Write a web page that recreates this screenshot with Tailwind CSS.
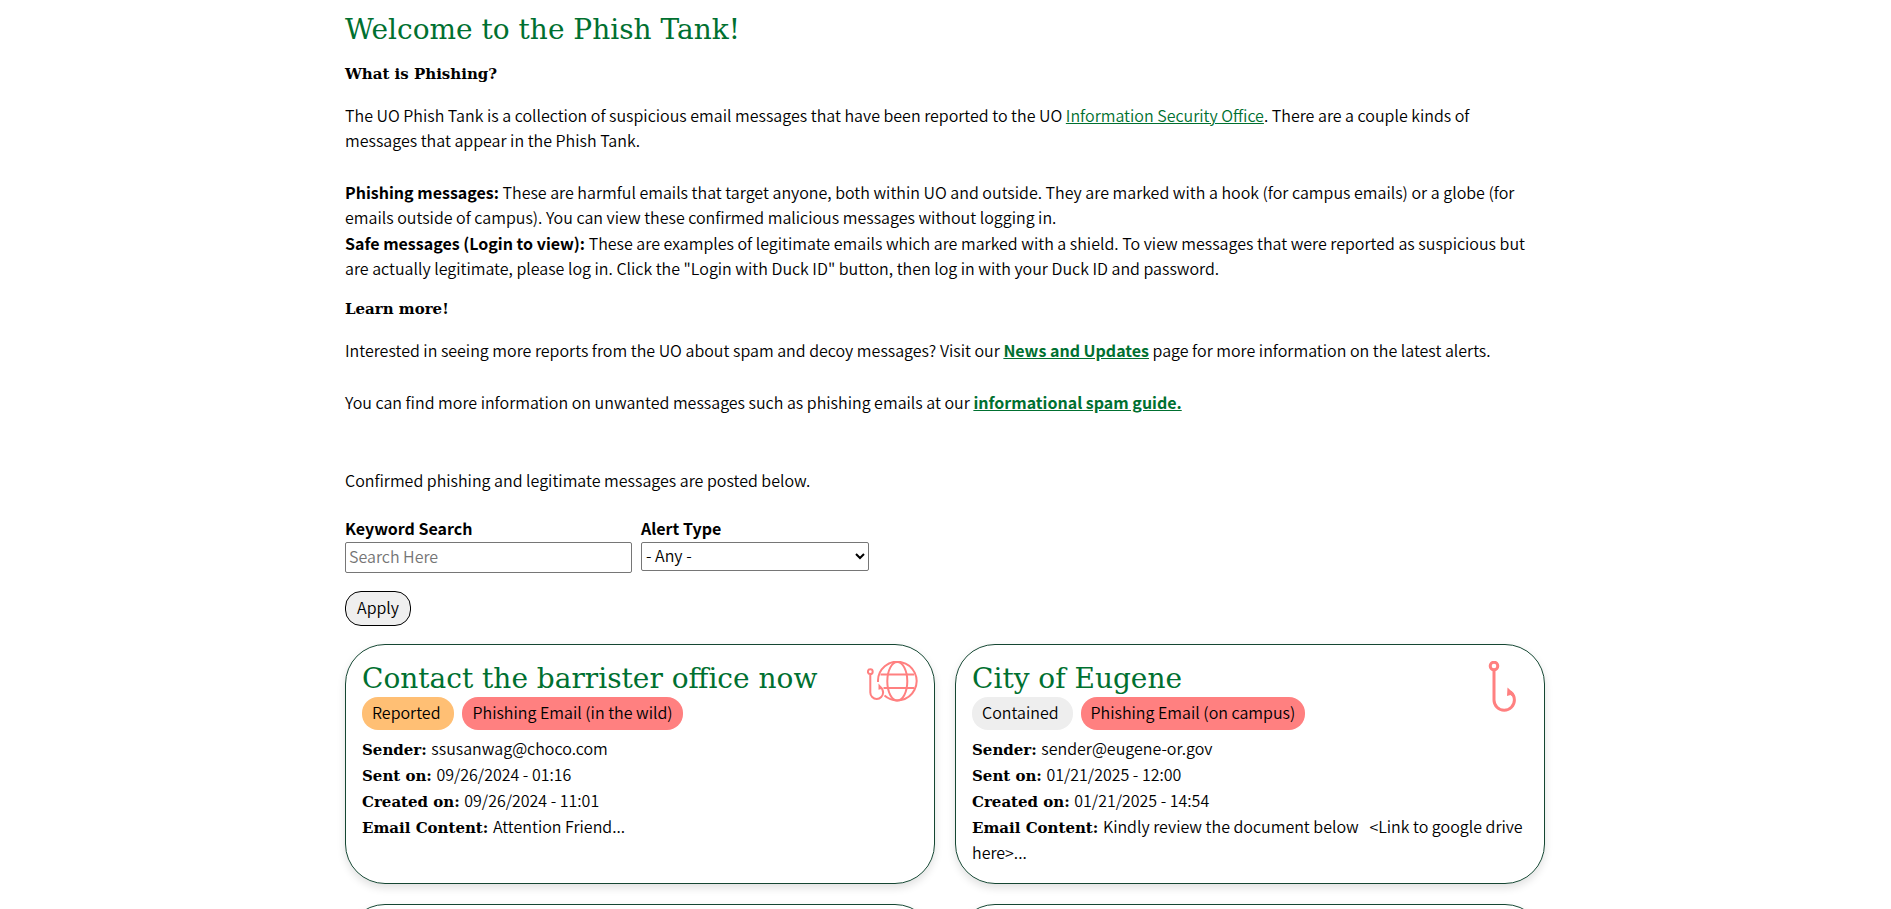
<!DOCTYPE html>
<html lang="en">
<head>
    <meta charset="UTF-8" />
    <meta name="viewport" content="width=device-width, initial-scale=1" />
    <title>Phish Tank</title>
    <script src="https://cdn.jsdelivr.net/npm/@tailwindcss/browser@4"></script>
</head>
<body class="bg-white text-black font-[350] text-base leading-[25px] font-['Noto_Sans_CJK_SC',sans-serif]">

<main class="max-w-[1201px] mx-auto pt-[9px] pr-px">
    <h1 class="text-[#007030] text-[28px] leading-[42px] font-normal font-['DejaVu_Serif',serif]">Welcome to the Phish Tank!</h1>

    <!-- Intro -->
    <h2 class="mt-[11px] font-bold text-[15px] leading-6 font-['DejaVu_Serif',serif]">What is Phishing?</h2>
    <p class="mt-[17px] pr-4">The UO Phish Tank is a collection of suspicious email messages that have been reported to the UO <a href="#" class="text-[#007030] underline">Information Security Office</a>. There are a couple kinds of messages that appear in the Phish Tank.</p>
    <ul class="mt-[27px]">
        <li><strong class="font-bold">Phishing messages:</strong> These are harmful emails that target anyone, both within UO and outside. They are marked with a hook (for campus emails) or a globe (for emails outside of campus). You can view these confirmed malicious messages without logging in.</li>
        <li class="mt-px"><strong class="font-bold">Safe messages (Login to view):</strong> These are examples of legitimate emails which are marked with a shield. To view messages that were reported as suspicious but are actually legitimate, please log in. Click the "Login with Duck ID" button, then log in with your Duck ID and password.</li>
    </ul>

    <h2 class="mt-4 font-bold text-[15px] leading-6 font-['DejaVu_Serif',serif]">Learn more!</h2>
    <p class="mt-[17px]">Interested in seeing more reports from the UO about spam and decoy messages? Visit our <a href="#" class="text-[#007030] font-bold underline">News and Updates</a> page for more information on the latest alerts.</p>
    <p class="mt-[27px]">You can find more information on unwanted messages such as phishing emails at our <a href="#" class="text-[#007030] font-bold underline">informational spam guide.</a></p>
    <p class="mt-[53px]">Confirmed phishing and legitimate messages are posted below.</p>

    <!-- Filters -->
    <form class="mt-[23px]">
        <div class="flex items-start gap-[9px]">
            <div>
                <label for="keyword" class="block font-bold leading-[25px]">Keyword Search</label>
                <input id="keyword" type="text" placeholder="Search Here" class="block mt-px w-[287px] h-[31px] border border-[#767676] rounded-xs px-[3px] pb-[3px] placeholder:text-[#757575]" />
            </div>
            <div>
                <label for="alert-type" class="block font-bold leading-[25px]">Alert Type</label>
                <div class="relative mt-px">
                    <select id="alert-type" class="block appearance-none w-[228px] h-[29px] border border-[#767676] rounded-xs bg-white pl-1 pr-5 pb-[3px] leading-6">
                        <option>- Any -</option>
                    </select>
                    <svg class="absolute right-1 top-[11px] w-[10px] h-[7px] pointer-events-none" viewBox="0 0 10 7" fill="none" stroke="#000" stroke-width="2"><path d="M1 1l4 4 4-4" /></svg>
                </div>
            </div>
        </div>
        <button type="button" class="block mt-[18px] h-[35px] px-[11px] pb-[2px] border border-black rounded-2xl bg-[#efefef]">Apply</button>
    </form>

    <!-- Messages -->
    <div class="mt-[18px] grid grid-cols-2 gap-5 leading-[26px]">
        <article class="flex justify-between min-h-[240px] border border-[#154733] rounded-[40px] p-4 shadow-[0_4px_8px_rgba(0,0,0,0.12)]">
            <div>
                <h3 class="text-[#007030] text-[28px] leading-9 font-normal font-['DejaVu_Serif',serif]">Contact the barrister office now</h3>
                <div class="flex gap-2">
                    <span class="rounded-2xl bg-[#ffbf74] h-[33px] leading-[31px] pl-[10px] pr-[14px]">Reported</span>
                    <span class="rounded-2xl bg-[#ff8080] h-[33px] leading-[31px] px-[10px]">Phishing Email (in the wild)</span>
                </div>
                <p class="mt-[5px]"><b class="font-bold text-[15px] leading-none mr-px font-['DejaVu_Serif',serif]">Sender:</b> ssusanwag@choco.com</p>
                <p><b class="font-bold text-[15px] leading-none mr-px font-['DejaVu_Serif',serif]">Sent on:</b> 09/26/2024 - 01:16</p>
                <p><b class="font-bold text-[15px] leading-none mr-px font-['DejaVu_Serif',serif]">Created on:</b> 09/26/2024 - 11:01</p>
                <p><b class="font-bold text-[15px] leading-none mr-px font-['DejaVu_Serif',serif]">Email Content:</b> Attention Friend...</p>
            </div>
            <!-- hook and globe -->
            <svg class="w-[51px] h-[51px] shrink-0" viewBox="0 0 51 51" fill="none" stroke="#ff8080" stroke-width="2">
                <circle cx="3.300" cy="10.700" r="2.400" />
                <path d="M3.300 13.500V31.500a6.400 6.400 0 0 0 12.800 0c0-2.500-1-4.200-3-5.500" />
                <path d="M11.500 22.500l4.500 5-4.500 1.200z" fill="#ff8080" stroke="none" />
                <path d="M11 21A19.300 19.300 0 1 1 17.500 34.500" />
                <ellipse cx="30.300" cy="20.300" rx="10" ry="19.300" />
                <path d="M13.500 13.500h33.500M16.500 27h30.500" />
            </svg>
        </article>

        <article class="flex justify-between min-h-[240px] border border-[#154733] rounded-[40px] p-4 shadow-[0_4px_8px_rgba(0,0,0,0.12)]">
            <div>
                <h3 class="text-[#007030] text-[28px] leading-9 font-normal font-['DejaVu_Serif',serif]">City of Eugene</h3>
                <div class="flex gap-2">
                    <span class="rounded-2xl bg-[#eee] h-[33px] leading-[31px] pl-[10px] pr-[14px]">Contained</span>
                    <span class="rounded-2xl bg-[#ff8080] h-[33px] leading-[31px] px-[10px]">Phishing Email (on campus)</span>
                </div>
                <p class="mt-[5px]"><b class="font-bold text-[15px] leading-none mr-px font-['DejaVu_Serif',serif]">Sender:</b> sender@eugene-or.gov</p>
                <p><b class="font-bold text-[15px] leading-none mr-px font-['DejaVu_Serif',serif]">Sent on:</b> 01/21/2025 - 12:00</p>
                <p><b class="font-bold text-[15px] leading-none mr-px font-['DejaVu_Serif',serif]">Created on:</b> 01/21/2025 - 14:54</p>
                <p class="-mr-[51px]"><b class="font-bold text-[15px] leading-none mr-px font-['DejaVu_Serif',serif]">Email Content:</b> Kindly review the document below &nbsp; &lt;Link to google drive here&gt;...</p>
            </div>
            <!-- hook -->
            <svg class="w-[51px] h-[51px] shrink-0" viewBox="0 0 51 51" fill="none" stroke="#ff8080" stroke-width="3">
                <circle cx="17" cy="5" r="3.800" />
                <path d="M17 9V39a10.200 10.200 0 0 0 20.400 0c0-3.500-1.400-6-4-8" />
                <path d="M30.500 26.500l6.500 6-1.500 3-2-1.500-3.500 1z" fill="#ff8080" stroke="none" />
            </svg>
        </article>

        <article class="min-h-[240px] border border-[#154733] rounded-[40px] p-4 shadow-[0_4px_8px_rgba(0,0,0,0.12)]"></article>
        <article class="min-h-[240px] border border-[#154733] rounded-[40px] p-4 shadow-[0_4px_8px_rgba(0,0,0,0.12)]"></article>
    </div>
</main>

</body>
</html>
